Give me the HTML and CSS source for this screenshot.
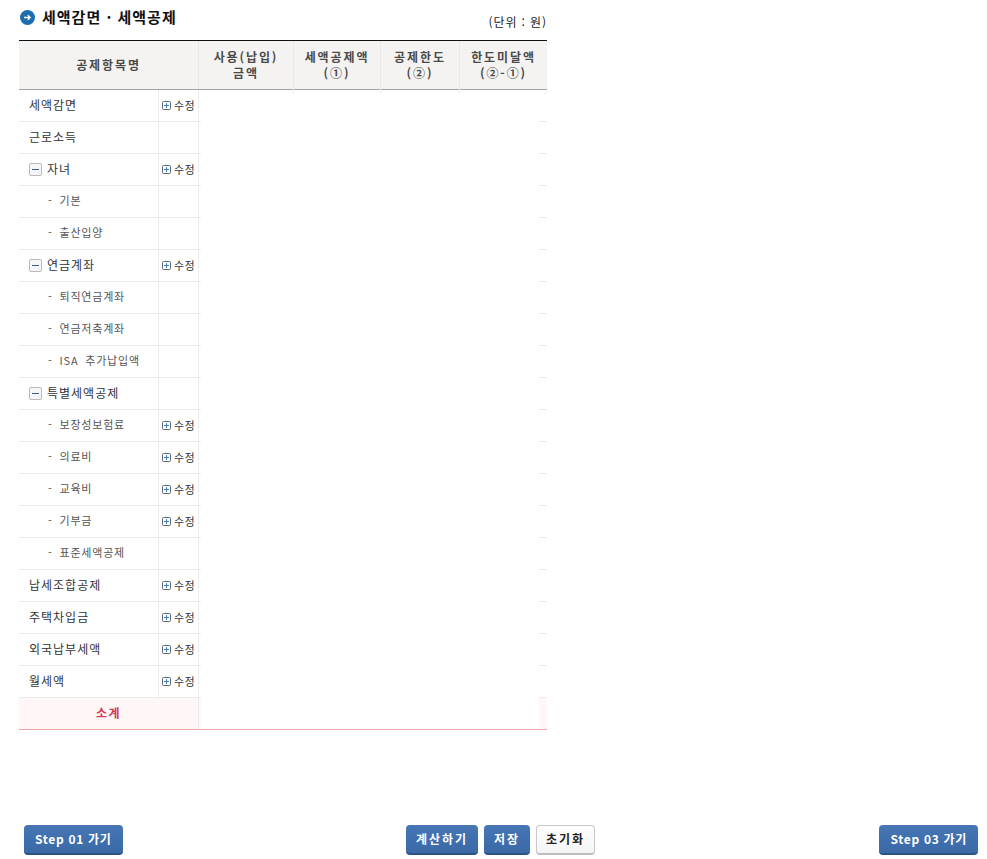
FILE: index.html
```html
<!DOCTYPE html>
<html lang="ko">

<head>
    <meta charset="UTF-8">
    <title>세액감면 · 세액공제</title>
    <link rel="stylesheet" href="styles.css">
</head>

<body>
    <div class="content">
        <div class="title-bar">
            <h2 class="title">
                <svg class="title-icon" width="15" height="15" viewBox="0 0 15 15">
                    <circle cx="7.5" cy="7.5" r="7.5" fill="#1b6fb0" />
                    <path d="M4 7.5h6M7.8 5.2l2.4 2.3-2.4 2.3" fill="none" stroke="#fff" stroke-width="1.3" />
                </svg>
                세액감면 · 세액공제
            </h2>
            <span class="unit">(단위 : 원)</span>
        </div>

        <div class="table">
            <div class="thead">
                <div class="th th-name">공제항목명</div>
                <div class="th th-paid">사용(납입)<br>금액</div>
                <div class="th th-credit">세액공제액<br>(①)</div>
                <div class="th th-limit">공제한도<br>(②)</div>
                <div class="th th-short">한도미달액<br>(②-①)</div>
            </div>

            <div class="row">
                <div class="name">세액감면</div>
                <div class="edit"><svg class="plus" viewBox="0 0 9 9"><use href="#plus-box" /></svg>수정</div>
                <div class="nub"></div><div class="blank"></div><div class="stub"></div>
            </div>
            <div class="row">
                <div class="name">근로소득</div>
                <div class="edit"></div>
                <div class="nub"></div><div class="blank"></div><div class="stub"></div>
            </div>
            <div class="row">
                <div class="name"><span class="minus"></span>자녀</div>
                <div class="edit"><svg class="plus" viewBox="0 0 9 9"><use href="#plus-box" /></svg>수정</div>
                <div class="nub"></div><div class="blank"></div><div class="stub"></div>
            </div>
            <div class="row">
                <div class="name sub">- 기본</div>
                <div class="edit"></div>
                <div class="nub"></div><div class="blank"></div><div class="stub"></div>
            </div>
            <div class="row">
                <div class="name sub">- 출산입양</div>
                <div class="edit"></div>
                <div class="nub"></div><div class="blank"></div><div class="stub"></div>
            </div>
            <div class="row">
                <div class="name"><span class="minus"></span>연금계좌</div>
                <div class="edit"><svg class="plus" viewBox="0 0 9 9"><use href="#plus-box" /></svg>수정</div>
                <div class="nub"></div><div class="blank"></div><div class="stub"></div>
            </div>
            <div class="row">
                <div class="name sub">- 퇴직연금계좌</div>
                <div class="edit"></div>
                <div class="nub"></div><div class="blank"></div><div class="stub"></div>
            </div>
            <div class="row">
                <div class="name sub">- 연금저축계좌</div>
                <div class="edit"></div>
                <div class="nub"></div><div class="blank"></div><div class="stub"></div>
            </div>
            <div class="row">
                <div class="name sub">- ISA 추가납입액</div>
                <div class="edit"></div>
                <div class="nub"></div><div class="blank"></div><div class="stub"></div>
            </div>
            <div class="row">
                <div class="name"><span class="minus"></span>특별세액공제</div>
                <div class="edit"></div>
                <div class="nub"></div><div class="blank"></div><div class="stub"></div>
            </div>
            <div class="row">
                <div class="name sub">- 보장성보험료</div>
                <div class="edit"><svg class="plus" viewBox="0 0 9 9"><use href="#plus-box" /></svg>수정</div>
                <div class="nub"></div><div class="blank"></div><div class="stub"></div>
            </div>
            <div class="row">
                <div class="name sub">- 의료비</div>
                <div class="edit"><svg class="plus" viewBox="0 0 9 9"><use href="#plus-box" /></svg>수정</div>
                <div class="nub"></div><div class="blank"></div><div class="stub"></div>
            </div>
            <div class="row">
                <div class="name sub">- 교육비</div>
                <div class="edit"><svg class="plus" viewBox="0 0 9 9"><use href="#plus-box" /></svg>수정</div>
                <div class="nub"></div><div class="blank"></div><div class="stub"></div>
            </div>
            <div class="row">
                <div class="name sub">- 기부금</div>
                <div class="edit"><svg class="plus" viewBox="0 0 9 9"><use href="#plus-box" /></svg>수정</div>
                <div class="nub"></div><div class="blank"></div><div class="stub"></div>
            </div>
            <div class="row">
                <div class="name sub">- 표준세액공제</div>
                <div class="edit"></div>
                <div class="nub"></div><div class="blank"></div><div class="stub"></div>
            </div>
            <div class="row">
                <div class="name">납세조합공제</div>
                <div class="edit"><svg class="plus" viewBox="0 0 9 9"><use href="#plus-box" /></svg>수정</div>
                <div class="nub"></div><div class="blank"></div><div class="stub"></div>
            </div>
            <div class="row">
                <div class="name">주택차입금</div>
                <div class="edit"><svg class="plus" viewBox="0 0 9 9"><use href="#plus-box" /></svg>수정</div>
                <div class="nub"></div><div class="blank"></div><div class="stub"></div>
            </div>
            <div class="row">
                <div class="name">외국납부세액</div>
                <div class="edit"><svg class="plus" viewBox="0 0 9 9"><use href="#plus-box" /></svg>수정</div>
                <div class="nub"></div><div class="blank"></div><div class="stub"></div>
            </div>
            <div class="row">
                <div class="name">월세액</div>
                <div class="edit"><svg class="plus" viewBox="0 0 9 9"><use href="#plus-box" /></svg>수정</div>
                <div class="nub"></div><div class="blank"></div><div class="stub"></div>
            </div>

            <div class="row total">
                <div class="total-label">소계</div>
                <div class="nub"></div><div class="blank"></div><div class="stub"></div>
            </div>
        </div>
    </div>

    <div class="actions">
        <div class="actions-left"><a class="btn btn-step">Step 01 가기</a></div>
        <div class="actions-center">
            <a class="btn">계산하기</a>
            <a class="btn">저장</a>
            <a class="btn btn-white">초기화</a>
        </div>
        <div class="actions-right"><a class="btn btn-step">Step 03 가기</a></div>
    </div>

    <svg class="defs" width="0" height="0">
        <symbol id="plus-box" viewBox="0 0 9 9">
            <rect x="0.5" y="0.5" width="8" height="8" rx="1" fill="#fff" stroke="#5c6670" />
            <path d="M2 4.5h5M4.5 2v5" stroke="#3f7fc4" />
        </symbol>
    </svg>
</body>

</html>
```

FILE: styles.css
```css
:root {
    --line: #ebebeb;
    --text: #333333;
    --head-bg: #f4f3f1;
    --total-bg: #fff6f7;
    --blue: #3c6dac;
}

html,
body {
    height: 100%;
}

body {
    margin: 0;
    display: flex;
    flex-direction: column;
    height: 859px;
    overflow: hidden;
    background: #ffffff;
    color: var(--text);
    font-family: "Noto Sans CJK KR", "Liberation Sans", sans-serif;
    font-size: 12px;
}

.content {
    flex: 1;
    width: 528px;
    margin-left: 19px;
}

.title-bar {
    display: flex;
    justify-content: space-between;
    height: 40px;
}

.title {
    display: flex;
    align-items: center;
    gap: 7px;
    height: 20px;
    margin: 7px 0 0 1px;
    color: #111111;
    font-size: 15px;
    font-weight: bold;
    line-height: 20px;
    letter-spacing: 1px;
}

.unit {
    margin-top: 13px;
    color: #222222;
    line-height: 18px;
    letter-spacing: 0.9px;
}

.thead {
    display: flex;
    height: 48px;
    border-top: 1px solid #111111;
    border-bottom: 1px solid #a3a3a3;
    background: var(--head-bg);
}

.th {
    position: relative;
    display: flex;
    align-items: center;
    justify-content: center;
    box-sizing: border-box;
    border-right: 1px solid #e8e8e6;
    color: #4a4a4a;
    font-weight: bold;
    line-height: 16px;
    text-align: center;
    letter-spacing: 1.9px;
}

.th::after {
    content: "";
    position: absolute;
    top: 100%;
    right: -1px;
    width: 1px;
    height: 5px;
    background: #ededed;
}

.th-name { width: 180px; }
.th-paid { width: 95px; }
.th-credit { width: 87px; }
.th-limit { width: 79px; }

.th-short {
    width: 87px;
    border-right: 0;
}

.th-short::after,
.th-name::after {
    display: none;
}

.row {
    display: flex;
    height: 32px;
}

.name,
.edit,
.nub,
.stub {
    box-sizing: border-box;
    border-bottom: 1px solid var(--line);
}

.name {
    display: flex;
    align-items: center;
    width: 139px;
    padding-bottom: 2px;
    padding-left: 10px;
    color: #333333;
    letter-spacing: 1px;
}

.sub {
    padding-bottom: 3px;
    padding-left: 29px;
    color: #555555;
    font-size: 11px;
    letter-spacing: 0.8px;
    word-spacing: 3px;
}

.minus {
    position: relative;
    box-sizing: border-box;
    width: 13px;
    height: 13px;
    margin-top: 2px;
    margin-right: 5px;
    border: 1px solid #b9b9b9;
    border-radius: 2px;
    background: #f5f7f9;
}

.minus::after {
    content: "";
    position: absolute;
    left: 2px;
    top: 5px;
    width: 7px;
    height: 1px;
    background: #35608f;
}

.edit {
    display: flex;
    align-items: center;
    width: 41px;
    padding-bottom: 2px;
    padding-left: 3px;
    border-left: 1px solid var(--line);
    border-right: 1px solid var(--line);
    font-size: 11px;
    letter-spacing: 0.5px;
    white-space: nowrap;
}

.plus {
    width: 9px;
    height: 9px;
    margin-top: 2px;
    margin-right: 3px;
}

.nub {
    width: 2px;
}

.blank {
    flex: 1;
}

.stub {
    width: 8px;
}

.total {
    box-sizing: border-box;
    border-bottom: 1px solid #f0a5a5;
}

.total-label,
.total .nub,
.total .stub {
    border-bottom: 0;
    background: var(--total-bg);
}

.total-label {
    box-sizing: border-box;
    width: 180px;
    border-right: 1px solid var(--line);
    color: #d23a55;
    font-weight: bold;
    line-height: 30px;
    text-align: center;
    letter-spacing: 1.5px;
}

.actions {
    display: grid;
    grid-template-columns: 1fr auto 1fr;
    align-items: start;
    height: 34px;
    margin: 0 9px 0 24px;
}

.actions-center {
    display: flex;
    gap: 6px;
    margin-right: 1px;
}

.actions-right {
    display: flex;
    justify-content: flex-end;
}

.actions-left {
    display: flex;
}

.btn {
    box-sizing: border-box;
    height: 30px;
    padding: 0 10px;
    border-radius: 4px;
    border-bottom: 2px solid #2b5388;
    background: linear-gradient(#4676b4, #3a69a6);
    color: #ffffff;
    font-weight: bold;
    line-height: 28px;
    letter-spacing: 1.95px;
}

.btn-step {
    padding: 0 11px;
    letter-spacing: 0.7px;
}

.btn-white {
    padding: 0 9px;
    border: 1px solid #c8c8c8;
    border-bottom: 2px solid #bdbdbd;
    background: linear-gradient(#ffffff, #f4f4f4);
    color: #222222;
    line-height: 26px;
}

.defs {
    position: absolute;
}
```
